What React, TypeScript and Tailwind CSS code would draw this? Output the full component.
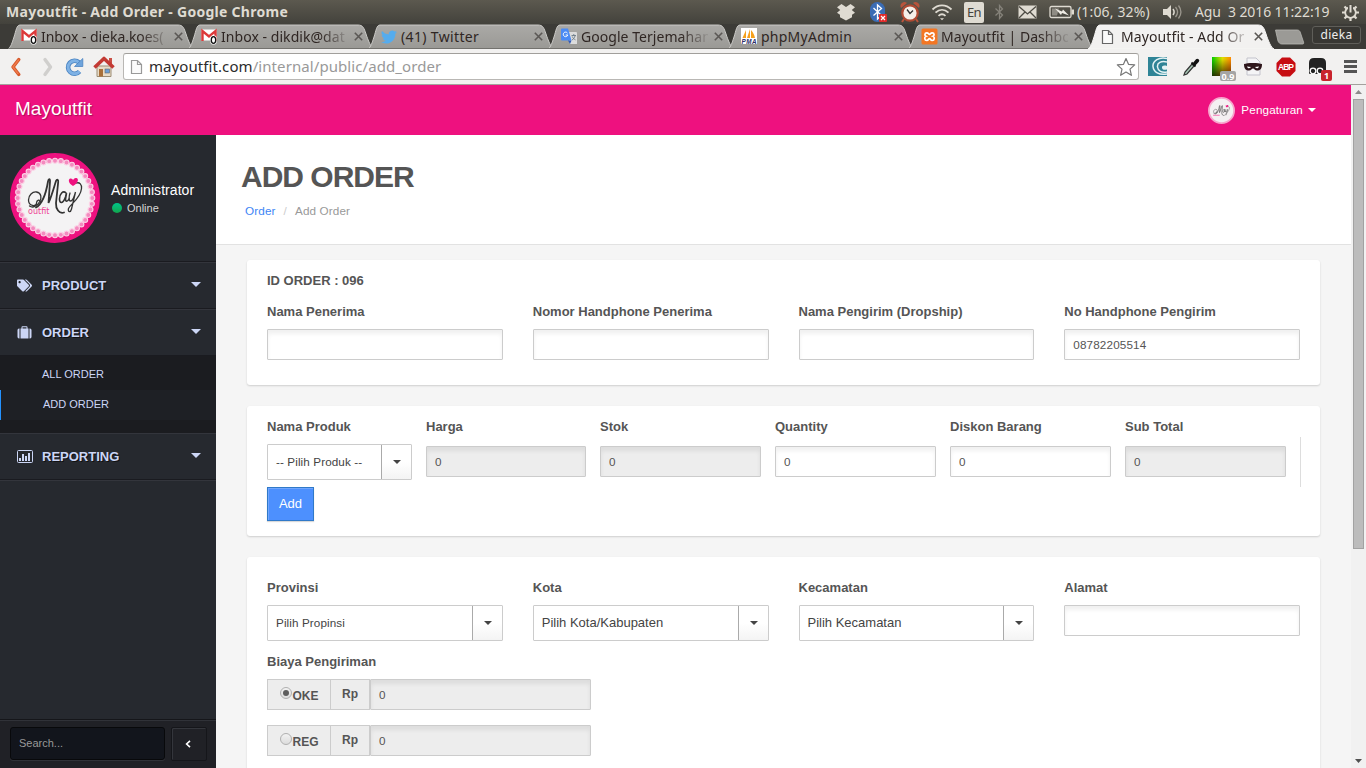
import React from "react";
import { FaTags } from "react-icons/fa";

const ui = "font-['Noto_Sans',sans-serif]";

/* ---------- browser icons ---------- */

const GmailIcon = () => (
  <svg width="17" height="17" viewBox="0 0 17 17">
    <rect x="0.5" y="1.5" width="15" height="11" fill="#fff" />
    <path d="M1.5 13V3L8 8.5 14.5 3v10" fill="none" stroke="#dd3a3a" strokeWidth="2.4" />
    <rect x="9.5" y="7.5" width="6" height="9" rx="2" fill="#fff" />
    <ellipse cx="12.5" cy="12" rx="2.2" ry="3.4" fill="#fff" stroke="#111" strokeWidth="1.3" />
  </svg>
);
const TwitterIcon = () => (
  <svg width="16" height="16" viewBox="0 0 24 24">
    <path fill="#55acee" d="M23.95 4.57a10 10 0 0 1-2.82.77 4.96 4.96 0 0 0 2.16-2.72c-.95.55-2 .95-3.13 1.19a4.92 4.92 0 0 0-8.38 4.48C7.69 8.1 4.07 6.13 1.64 3.16a4.92 4.92 0 0 0 1.52 6.57 4.9 4.9 0 0 1-2.23-.62v.06a4.92 4.92 0 0 0 3.95 4.83 5 5 0 0 1-2.21.08 4.94 4.94 0 0 0 4.6 3.42A9.87 9.87 0 0 1 0 19.54a13.99 13.99 0 0 0 7.55 2.21c9.14 0 14.31-7.72 14.0-14.6a10 10 0 0 0 2.4-2.58z" />
  </svg>
);
const TranslateIcon = () => (
  <svg width="17" height="17" viewBox="0 0 17 17">
    <path d="M6 4h9a1 1 0 0 1 1 1v11H9z" fill="#dcdcdc" />
    <path d="M0 1.500a1 1 0 0 1 1-1h6l3.500 12H1a1 1 0 0 1-1-1z" fill="#4b8bf4" />
    <path d="M7 12.500h3.500L9 16z" fill="#3058b5" />
    <path d="M6.500 5.100A2.300 2.300 0 1 0 6.800 7H4.700" fill="none" stroke="#fff" strokeWidth="1" />
    <path d="M10.500 7.500h4.500M12.800 6v1.500M14 8c-.4 2-1.600 3-3 4M11.300 8.500c.5 1.500 1.700 2.600 3.200 3.400" fill="none" stroke="#6b7a86" strokeWidth=".9" />
  </svg>
);
const PmaIcon = () => (
  <svg width="17" height="17" viewBox="0 0 17 17">
    <rect width="16" height="16" fill="#fff" />
    <path d="M1.500 10L5 2v8zM6 10L9 1v9zM10 10V2c2 2 3.500 5 4 8z" fill="#f6a01c" />
    <text x="0.500" y="15.800" fontSize="6.300" fontWeight="bold" fontStyle="italic" fill="#2b2b66" fontFamily="Liberation Sans, sans-serif" textLength="15">PMA</text>
  </svg>
);
const XamppIcon = () => (
  <svg width="17" height="17" viewBox="0 0 17 17">
    <rect x=".5" y=".5" width="16" height="16" rx="1.500" fill="#f37623" />
    <path d="M5.800 4.800c1.800 0 1.700 1.700 2.700 1.700s.9-1.700 2.700-1.700c2.400 0 2.300 2.900.8 3.500 1.900.7 1.700 4.200-.8 4.200-1.800 0-1.700-2-2.700-2s-.9 2-2.700 2c-2.500 0-2.700-3.500-.8-4.200-1.500-.6-1.600-3.500.8-3.500z" fill="none" stroke="#fff" strokeWidth="1.700" />
  </svg>
);
const PageIcon = ({ stroke = "#666" }: { stroke?: string }) => (
  <svg width="13" height="16" viewBox="0 0 13 16">
    <path d="M1.500 1.500h6l4 4v9h-10z M7.500 1.500v4h4" fill="#fafafa" stroke={stroke} strokeWidth="1.200" />
  </svg>
);

const Tab = ({
  icon,
  text,
  active = false,
  fade = true,
  track = "tracking-[0.25px]",
}: {
  icon: React.ReactNode;
  text: string;
  active?: boolean;
  fade?: boolean;
  track?: string;
}) => (
  <div className={`relative -mr-[6px] h-[25px] w-[186px] shrink-0 ${active ? "z-10" : ""}`}>
    <svg className="absolute inset-0" width="186" height="25" viewBox="0 0 186 25">
      <defs>
        <linearGradient id="tabfill" x1="0" x2="0" y1="0" y2="1">
          <stop offset="0" stopColor="#aaa9a6" />
          <stop offset="1" stopColor="#9a9995" />
        </linearGradient>
      </defs>
      <path
        d="M0 25C3 23 4 19 6 13S8.500 1 12 1H170C175 1 176 4 178 10S183 24 186 25Z"
        fill={active ? "#f2f1f0" : "url(#tabfill)"}
        stroke={active ? "#f7f6f5" : "#cbcac7"}
        strokeWidth="1"
      />
      {!active && <path d="M0 24.500H186" stroke="#73726e" />}
    </svg>
    <div className="relative flex h-[25px] items-center pl-[13px]">
      <span className="flex h-[17px] w-5 shrink-0 items-center">{icon}</span>
      <span
        className={`w-[127px] shrink-0 overflow-hidden text-[14px] leading-[22px] whitespace-nowrap text-[#2f2623] ${track} ${
          fade ? "[mask-image:linear-gradient(to_right,black_78%,rgba(0,0,0,0.1))]" : ""
        }`}
      >
        {text}
      </span>
      <svg className="ml-[6px] shrink-0" width="9" height="9" viewBox="0 0 9 9">
        <path d="M.8.8l7.400 7.400M8.200.8L.8 8.200" stroke="#5b5855" strokeWidth="1.600" />
      </svg>
    </div>
  </div>
);

const TitleBar = () => (
  <div className={`flex h-6 shrink-0 items-center bg-linear-to-b from-[#5c594f] to-[#43423c] ${ui} text-[#dfdbd2]`}>
    <div className="-mt-px w-[830px] pl-[6px] text-[14px] font-bold tracking-[0.28px] whitespace-nowrap">
      <span>Mayoutfit - Add Order - Google Chrome</span>
    </div>
    <svg className="ml-[6px]" width="20" height="18" viewBox="0 0 20 18">
      <path d="M5.500 1L10 4l4.500-3L19 4.300 15.800 7 19 9.800l-3 2v2.400L10 17.500l-6-3.300v-2.400l-3-2L4.200 7 1 4.300z" fill="#dfdbd2" />
    </svg>
    <svg className="ml-[13px]" width="19" height="22" viewBox="0 0 19 22">
      <rect x="1" y="1" width="15" height="20" rx="7.500" fill="#3a6cb4" />
      <path d="M4.500 7l8 7.500-4 3.500V4l4 3.500-8 7" fill="none" stroke="#fff" strokeWidth="1.300" />
      <rect x="10" y="13" width="8" height="8" rx="1" fill="#e02b2b" />
      <path d="M12 15l4 4m0-4l-4 4" stroke="#fff" strokeWidth="1.200" />
    </svg>
    <svg className="ml-[11px]" width="22" height="22" viewBox="0 0 22 22">
      <path d="M2 7a4 4 0 0 1 6-5zM20 7a4 4 0 0 0-6-5z" fill="#b8543c" />
      <path d="M5 18l-2 3M17 18l2 3" stroke="#b8543c" strokeWidth="2" />
      <circle cx="11" cy="12" r="7.700" fill="#f5efe9" stroke="#b04a33" strokeWidth="2.200" />
      <path d="M8 8.500l3 4 3-3" fill="none" stroke="#333" strokeWidth="1.300" />
    </svg>
    <svg className="ml-[10px]" width="22" height="18" viewBox="0 0 22 18" fill="none" stroke="#dfdbd2" strokeWidth="1.800">
      <path d="M1.500 6.500C7 1 15 1 20.500 6.500M4.500 9.700c4-3.900 9-3.900 13 0M7.500 12.800c2.200-2 4.800-2 7 0" />
      <path d="M9 15.300h4l-2 2z" fill="#dfdbd2" stroke="none" />
    </svg>
    <span className="ml-[11px] flex h-[21px] w-5 items-center justify-center rounded-[2px] bg-[#dfdbd2] text-[13px] tracking-[-0.040em] text-[#45433d]">
      <span className="mt-px">En</span>
    </span>
    <svg className="ml-[10px]" width="11" height="18" viewBox="0 0 11 18">
      <path d="M1.500 5.500l7 6.500-3 3.500V2.500l3 3.500-7 6.500" fill="none" stroke="#85827a" strokeWidth="1.300" />
    </svg>
    <svg className="ml-[13px]" width="19" height="14" viewBox="0 0 19 14">
      <rect x=".5" y=".5" width="18" height="13" fill="#dfdbd2" />
      <path d="M1 1.500L9.500 9 18 1.500M1 13l6-6M18 13l-6-6" fill="none" stroke="#4d4b44" strokeWidth="1.300" />
    </svg>
    <svg className="ml-[12px]" width="26" height="14" viewBox="0 0 26 14">
      <rect x="1" y="1.500" width="21" height="11" rx="1.500" fill="none" stroke="#dfdbd2" strokeWidth="1.300" />
      <path d="M22.500 4.500H25v5h-2.500z" fill="#dfdbd2" />
      <path d="M3 3.500h7l-2 7H3z" fill="#8f8c84" />
      <path d="M6 3.500l7 3 1-2 6 6-7-2.500-1 2z" fill="#efece5" />
    </svg>
    <span className="-mt-px ml-[2px] w-[86px] text-[14px] tracking-[0.150px] whitespace-nowrap">(1:06, 32%)</span>
    <svg width="20" height="16" viewBox="0 0 20 16">
      <path d="M0 5h4l4-4v14l-4-4H0z" fill="#dfdbd2" />
      <path d="M10 5c1.500 2 1.500 4 0 6" fill="none" stroke="#dfdbd2" strokeWidth="1.500" />
      <path d="M12.500 3c2.500 3 2.500 7 0 10M15.500 1.500c3 4 3 9 0 13" fill="none" stroke="#9b978e" strokeWidth="1.300" />
    </svg>
    <span className="-mt-px ml-[12px] w-[147px] text-[14px] tracking-[-0.100px] whitespace-pre">Agu  3 2016 11:22:19</span>
    <svg width="17" height="17" viewBox="0 0 17 17" fill="none" stroke="#dfdbd2">
      <circle cx="8.500" cy="8.500" r="5.300" strokeWidth="1.800" />
      <path d="M8.500 14v3M3 8.500H0M14 8.500h3M4.600 12.400l-2.100 2.100M12.400 12.400l2.100 2.100M4.600 4.600L2.500 2.500M12.400 4.600l2.100-2.100" strokeWidth="2.200" />
      <path d="M8.500 0v8" stroke="#504e46" strokeWidth="5" />
      <path d="M8.500 1v7.500" strokeWidth="2" />
    </svg>
  </div>
);

const TabStrip = () => (
  <div className={`flex h-[25px] shrink-0 bg-[#3c3b37] pl-2 ${ui}`}>
    <Tab icon={<GmailIcon />} text="Inbox - dieka.koes(" track="tracking-[-0.05px]" />
    <Tab icon={<GmailIcon />} text="Inbox - dikdik@dat" track="tracking-[0.05px]" />
    <Tab icon={<TwitterIcon />} text="(41) Twitter" fade={false} track="tracking-[0.35px]" />
    <Tab icon={<TranslateIcon />} text="Google Terjemahan" track="tracking-[0.05px]" />
    <Tab icon={<PmaIcon />} text="phpMyAdmin" fade={false} />
    <Tab icon={<XamppIcon />} text="Mayoutfit | Dashbo" track="tracking-[0.05px]" />
    <Tab icon={<PageIcon />} text="Mayoutfit - Add Or" active track="tracking-[0.1px]" />
    <svg className="mt-[5px] ml-[5px]" width="32" height="16" viewBox="0 0 32 16">
      <path d="M2.500 1H24c2 0 3 1 3.500 3l3 9c.5 1.500 0 2-1 2H9c-2 0-3-1-4-3z" fill="#9b9a96" stroke="#b8b7b3" strokeWidth=".8" />
    </svg>
    <div className="mt-[2px] ml-[7px] flex h-[18px] w-[49px] items-center justify-center rounded-[3px] border border-[#5f5e59] bg-[#383733] text-[12px] tracking-[0.300px] text-[#eeeeec]">dieka</div>
  </div>
);

const Toolbar = () => (
  <div className={`flex h-9 shrink-0 items-center border-b border-[#a3a19d] bg-[#f2f1f0] ${ui}`}>
    <svg className="ml-[9px]" width="14" height="20" viewBox="0 0 14 20">
      <path d="M9.800 2.500L4 10l5.800 7.500" fill="none" stroke="#d5572a" strokeWidth="3.400" strokeLinecap="round" strokeLinejoin="round" />
      <path d="M9.500 3L4 10l5 6.500" fill="none" stroke="#ef7b4b" strokeWidth="1.500" strokeLinecap="round" />
    </svg>
    <svg className="ml-[18px]" width="14" height="20" viewBox="0 0 14 20">
      <path d="M4 2.500L9.500 10 4 17.500" fill="none" stroke="#d0cfcd" strokeWidth="3.400" strokeLinecap="round" strokeLinejoin="round" />
    </svg>
    <svg className="ml-[10px]" width="20" height="20" viewBox="0 0 20 20">
      <path d="M14.500 14.500A6.500 6.500 0 1 1 14 5.500" fill="none" stroke="#4b84c2" strokeWidth="4.600" />
      <path d="M14.500 14.500A6.500 6.500 0 1 1 14 5.500" fill="none" stroke="#7fb2e5" strokeWidth="2.800" />
      <path d="M17.800 1.500v8h-8.300z" fill="#6ea4dc" stroke="#4b84c2" strokeWidth=".8" />
    </svg>
    <svg className="ml-[8px]" width="22" height="22" viewBox="0 0 22 22">
      <path d="M4 10h14v10.500H4z" fill="#e8dcc8" stroke="#9b8c75" />
      <path d="M6 13h4v7.500H6z" fill="#a8703a" />
      <rect x="12" y="13" width="4.500" height="4" fill="#6aa0d8" stroke="#666" strokeWidth=".6" />
      <path d="M16 2h3v6h-3z" fill="#c94f45" />
      <path d="M1.500 11.500L11 2.500l9.500 9" fill="none" stroke="#c33a34" strokeWidth="3.600" strokeLinejoin="round" />
    </svg>
    <div className="ml-[8px] flex h-[27px] w-[1016px] items-center rounded-[3px] border border-[#b9b7b4] border-t-[#a19f9b] bg-white pl-[6px]">
      <PageIcon stroke="#999" />
      <span className="-mt-px ml-[6px] text-[15px] leading-[24px] tracking-[0.080px] whitespace-nowrap text-[#2b2b2b]">
        mayoutfit.com<span className="text-[#999]">/internal/public/add_order</span>
      </span>
      <svg className="mr-[2px] ml-auto" width="20" height="20" viewBox="0 0 20 20">
        <path d="M10 1.500l2.500 5.800 6.200.6-4.700 4.200 1.400 6.200L10 15l-5.400 3.300L6 12.100 1.300 7.900l6.200-.6z" fill="#fff" stroke="#777" strokeWidth="1.200" strokeLinejoin="round" />
      </svg>
    </div>
    <svg className="ml-[9px]" width="19" height="19" viewBox="0 0 19 19">
      <rect width="19" height="19" fill="#2f8496" />
      <path d="M19 1.500C11-.5 4.500 4 5 9.500S11 18.500 19 17M19 5c-6-1.500-10 1-9.500 5s4 6 9.500 5" fill="none" stroke="#e5f3f5" strokeWidth="1.500" />
      <path d="M19 9c-3.500-1-5.500 0-5 2s2.500 2 5 1.500z" fill="#e5f3f5" />
    </svg>
    <svg className="ml-[15px]" width="18" height="20" viewBox="0 0 18 20">
      <path d="M2 18l1-3 7-8 2 2-7 8z" fill="#a9c8b7" stroke="#333" strokeWidth="1.200" />
      <path d="M9.500 5.500l4 4M12 6l2.500-3c1-1 2.500.3 1.500 1.500L13.500 7z" stroke="#111" strokeWidth="1.800" fill="#111" />
    </svg>
    <div className="relative ml-[12px] h-[19px] w-[19px] bg-[linear-gradient(to_bottom,transparent_10%,#200_130%),linear-gradient(to_right,#0c0,#dd0_55%,#f80)]">
      <span className="absolute top-[14px] left-[8px] flex h-[10px] w-[16px] items-center justify-center rounded-[2px] bg-[#a5a5a5] text-[9px] leading-none font-bold text-white">0.9</span>
    </div>
    <svg className="ml-[12px]" width="20" height="20" viewBox="0 0 20 20">
      <path d="M4 1h9l4 4v13H4z" fill="#f4f4f6" stroke="#c3c3cc" />
      <path d="M1 7c3-1.500 15-1.500 18 0 0 5-2 6.500-5 6.500-2 0-3-2-4-2s-2 2-4 2c-3 0-5-1.500-5-6.500z" fill="#2e161b" />
      <path d="M4 9.500l4 .6c-1 1.700-3.500 1.500-4-.6zM16 9.500l-4 .6c1 1.700 3.500 1.500 4-.6z" fill="#fff" />
    </svg>
    <svg className="ml-[13px]" width="20" height="20" viewBox="0 0 20 20">
      <path d="M6 .500h8L19.500 6v8L14 19.500H6L.500 14V6z" fill="#c70d12" />
      <text x="10" y="13.300" textAnchor="middle" fontSize="8.500" fontWeight="bold" fill="#fff" fontFamily="Liberation Sans, sans-serif" textLength="16">ABP</text>
    </svg>
    <div className="relative ml-[12px] h-5 w-[19px]">
      <svg width="19" height="20" viewBox="0 0 19 20">
        <path d="M1 6q0-5 5-5h7q5 0 5 5v10q0 1-1 1H2q-1 0-1-1z" fill="#222" />
        <circle cx="5" cy="14" r="2.800" fill="#222" stroke="#fff" strokeWidth="1.300" />
        <circle cx="12" cy="14" r="2.800" fill="#222" stroke="#fff" strokeWidth="1.300" />
      </svg>
      <span className="absolute top-[13px] left-[13px] flex h-[11px] w-[11px] items-center justify-center rounded-[2px] bg-[#c8232c] text-[9px] leading-none font-bold text-white">1</span>
    </div>
    <div className="ml-[17px] flex w-[13px] flex-col gap-[2px]">
      <span className="h-[3px] bg-[#555]" />
      <span className="h-[3px] bg-[#555]" />
      <span className="h-[3px] bg-[#555]" />
    </div>
  </div>
);

/* ---------- brand logo ---------- */

const beads = Array.from({ length: 40 }, (_, i) => (i * Math.PI * 2) / 40);

const Script = () => (
  <g>
    <g fill="none" stroke="#333" strokeWidth="1.300" strokeLinecap="round">
      <path d="M30.500 49c-.5-3-4-2-4 1 0 4-8 3.500-8-3 0-5 4-8.500 8-8 5 .8 5.500 6 3 10-2.500 4-6.500 6.500-10 4" />
      <path d="M26 54.500c7-4 10-14 12-26 .6-3 2.200-3 2 0L38.500 50C42 42 44 34 46 28c1-2 2.500-1.500 2.200 1L46 50c-.3 6 3 11 8 9.500" strokeWidth="1.800" />
      <path d="M56 40c-3-3-6.500 1-6.500 6s3.500 5 6-2l1-4-1 6c0 3 2 3 3.500 0" strokeWidth="1.600" />
      <path d="M60 40c-1 3-1.500 8 .5 8s4-5 5-9l-4 17c-1 4-4 3-3-.5 2.500-5 12-10 13-20 .5-4-2-6.500-5-5.500" />
    </g>
    <path d="M63 33c-5-3-5-7-2.500-7.500 1.300-.2 2.300.8 2.500 1.700 0-.7 1.500-2.700 3.500-2.200 3 1.300 1 5.500-3.500 8z" fill="#ee117f" />
  </g>
);

const Logo = () => (
  <svg width="90" height="90" viewBox="0 0 90 90" role="img" aria-label="May outfit">
    <circle cx="45" cy="45" r="45" fill="#ee117f" />
    <circle cx="45" cy="45" r="36.500" fill="#f4f3f4" />
    <g fill="#f48abf" stroke="#fbd3e6" strokeWidth="1.100">
      {beads.map((a) => (
        <circle key={a} cx={45 + 37.300 * Math.cos(a)} cy={45 + 37.300 * Math.sin(a)} r="2.500" />
      ))}
    </g>
    <Script />
    <text x="18" y="61" fontSize="8" fill="#ee3f93" fontFamily="DejaVu Sans, sans-serif" textLength="21.500">outfit</text>
  </svg>
);

const Caret = ({ className }: { className: string }) => (
  <svg className={className} viewBox="0 0 10 5" preserveAspectRatio="none">
    <path d="M0 0h10L5 5z" fill="currentColor" />
  </svg>
);

/* ---------- sidebar ---------- */

const NavItem = ({ icon, label }: { icon: React.ReactNode; label: string }) => (
  <div className="flex h-[47px] shrink-0 items-center border-t border-b border-t-[#33353c] border-b-[#1a1b20] bg-[#26292f] pr-[15px] pl-[17px] text-[13px] font-bold text-[#ccd6f6] [text-shadow:1px_1px_0_#111]">
    <span className="flex w-[25px]">{icon}</span>
    <span className="flex-1">{label}</span>
    <Caret className="-mt-[2px] h-[5px] w-[10px]" />
  </div>
);

const Sidebar = () => (
  <aside className="flex w-[216px] shrink-0 flex-col bg-[#26292f]">
    <div className="flex h-[127px] shrink-0 items-center border-b border-[#1a1b20] pl-[10px]">
      <Logo />
      <div className="ml-[11px]">
        <div className="mt-px text-[14px] leading-[18px] tracking-[0.050px] text-white">Administrator</div>
        <div className="flex items-center text-[11px] leading-[18px] text-[#d6d6d6]">
          <span className="mr-[5px] ml-px h-[10px] w-[10px] rounded-full bg-linear-to-b from-[#00c389] to-[#11a64c]" />
          Online
        </div>
      </div>
    </div>
    <NavItem icon={<FaTags size={15} />} label="PRODUCT" />
    <NavItem
      icon={
        <svg width="15" height="14" viewBox="0 0 15 14">
          <path d="M2.500 2.500v10H2A1.600 1.600 0 0 1 .500 11V4A1.600 1.600 0 0 1 2 2.500zM11.500 2.500V12.500h-8V2.500h1V1.200q0-.9.900-.9h4.200q.9 0 .9.900v1.300zM9.500 2.500V1.300h-4v1.200zM14.500 4v7a1.600 1.600 0 0 1-1.500 1.500h-.5v-10h.5A1.600 1.600 0 0 1 14.500 4z" fill="currentColor" />
        </svg>
      }
      label="ORDER"
    />
    <div className="flex h-[77px] shrink-0 flex-col bg-[#1b1c20] pt-[4px] text-[11px] text-[#ccd6f6]">
      <div className="flex h-[30px] items-center pb-[2px] pl-[42px]">ALL ORDER</div>
      <div className="flex h-[30px] items-center border-l border-[#2492ff] bg-[#1e2025] pb-[2px] pl-[42px]">ADD ORDER</div>
    </div>
    <NavItem
      icon={
        <svg width="16" height="13" viewBox="0 0 16 13">
          <rect x=".5" y=".5" width="15" height="12" rx="1" fill="none" stroke="currentColor" />
          <path d="M2 8h2v3H2zM5 4h2v7H5zM8 6h2v5H8zM11 3h2v8h-2z" fill="currentColor" />
        </svg>
      }
      label="REPORTING"
    />
    <div className="flex-1 border-t border-[#33353c]" />
    <div className="flex h-[49px] shrink-0 items-start border-t border-[#15161a] bg-[#202126] pt-[7px] pl-[10px] shadow-[inset_0_1px_0_#303238]">
      <div className="flex h-[33px] w-[155px] items-center rounded-[3px] border border-[#08090b] bg-[#12151c] pl-2 text-[11px] text-[#999] shadow-[0_1px_0_#303238]">Search...</div>
      <div className="ml-[6px] flex h-[34px] w-[36px] items-center justify-center rounded-[2px] border border-[#15161a] bg-[#202126] pr-[2px] pb-px text-white shadow-[inset_1px_1px_0_#34363c]">
        <svg width="6" height="8" viewBox="0 0 6 8">
          <path d="M5 .800L1.600 4 5 7.200" fill="none" stroke="currentColor" strokeWidth="1.600" />
        </svg>
      </div>
    </div>
  </aside>
);

/* ---------- form pieces ---------- */

const Label = ({ children }: { children: React.ReactNode }) => (
  <label className="block h-[18px] text-[13px] leading-[18px] font-bold whitespace-nowrap text-[#555]">{children}</label>
);

const Field = ({ value = "", disabled = false }: { value?: string; disabled?: boolean }) => (
  <div
    className={`flex h-[31px] w-full items-center rounded-[1px] border border-[#ccc] pl-2 text-[11.700px] tracking-[0.150px] text-[#555] ${
      disabled ? "bg-[#ededed] shadow-[inset_0_4px_4px_rgba(0,0,0,0.07)]" : "bg-white shadow-[inset_0_4px_4px_rgba(0,0,0,0.06)]"
    }`}
  >
    <span className="leading-[18px]">{value}</span>
  </div>
);

const Select = ({ text, size = "text-[13px]" }: { text: string; size?: string }) => (
  <div className="flex h-9 w-full rounded-[1px] border border-[#ccc] bg-white text-[#444]">
    <div className={`flex flex-1 items-center pl-2 whitespace-nowrap ${size}`}>{text}</div>
    <div className="flex w-[30px] items-center justify-center border-l border-[#aaa] bg-linear-to-b from-white from-50% to-[#f4f4f4] pl-px">
      <Caret className="h-[4px] w-2" />
    </div>
  </div>
);

const Card = ({ children, className }: { children: React.ReactNode; className: string }) => (
  <section className={`ml-[31px] w-[1073px] shrink-0 rounded-[3px] bg-white px-5 shadow-[0_1px_2px_rgba(0,0,0,0.16)] ${className}`}>{children}</section>
);

const ShippingRow = ({ name, checked = false }: { name: string; checked?: boolean }) => (
  <div className="flex h-[31px] w-[324px] text-[12px] font-bold text-[#555]">
    <div className="flex w-[64px] items-center border border-[#ccc] bg-[#ededed] pl-[12px]">
      <span className="mr-[0.5px] -mt-1 flex h-[12px] w-[12px] shrink-0 items-center justify-center rounded-full border border-[#b0b0b0] bg-linear-to-b from-[#f2f2f2] to-[#dcdcdc]">
        {checked && <span className="h-[6px] w-[6px] rounded-full bg-[#5d5d5d]" />}
      </span>
      <span className="mt-[2px]">{name}</span>
    </div>
    <div className="flex w-[38px] items-center justify-center border-y border-[#ccc] bg-[#ededed]">
      <span className="-mt-px">Rp</span>
    </div>
    <div className="flex flex-1 border-l border-[#ccc] font-normal">
      <Field value="0" disabled />
    </div>
  </div>
);

const Main = () => (
  <main className="flex w-[1135px] shrink-0 flex-col bg-[#f5f5f5]">
    <div className="h-[110px] shrink-0 border-b border-[#e2e2e2] bg-white pt-[24px] pl-[25px]">
      <h1 className="text-[30px] leading-9 font-bold tracking-[-1px] text-[#555]">ADD ORDER</h1>
      <div className="mt-[7px] ml-1 flex text-[11.700px] leading-[18px] tracking-[0.140px]">
        <a className="text-[#3d85f5]">Order</a>
        <span className="mx-2 text-[#ccc]">/</span>
        <span className="text-[#999]">Add Order</span>
      </div>
    </div>

    <Card className="mt-[15px] h-[125px] pt-[12px]">
      <Label>ID ORDER : 096</Label>
      <div className="mt-[13px] grid grid-cols-4 gap-[30px]">
        {[
          ["Nama Penerima", ""],
          ["Nomor Handphone Penerima", ""],
          ["Nama Pengirim (Dropship)", ""],
          ["No Handphone Pengirim", "08782205514"],
        ].map(([label, value]) => (
          <div key={label} className="flex flex-col gap-2">
            <Label>{label}</Label>
            <Field value={value} />
          </div>
        ))}
      </div>
    </Card>

    <Card className="mt-[21px] h-[130px] pt-[12px]">
      <div className="-mr-px flex">
        <div className="grid flex-1 grid-cols-[145px_160px_161px_161px_161px_161px] gap-x-[14px]">
          <div className="flex flex-col gap-2">
            <Label>Nama Produk</Label>
            <Select text="-- Pilih Produk --" size="text-[11.7px] tracking-[0.1px]" />
          </div>
          {[
            { label: "Harga", disabled: true },
            { label: "Stok", disabled: true },
            { label: "Quantity", disabled: false },
            { label: "Diskon Barang", disabled: false },
            { label: "Sub Total", disabled: true },
          ].map((f) => (
            <div key={f.label} className="flex flex-col gap-[10px]">
              <Label>{f.label}</Label>
              <Field value="0" disabled={f.disabled} />
            </div>
          ))}
        </div>
        <div className="mt-[19px] -mb-[7px] h-[50px] w-px bg-[#ddd]" />
      </div>
      <button className="mt-[7px] flex h-[34px] w-[47px] items-center justify-center border border-[#3079c8] bg-[#4d90fe] text-[13px] text-white shadow-[inset_1px_1px_0_rgba(255,255,255,0.2),0_1px_1px_rgba(0,0,0,0.15)]">Add</button>
    </Card>

    <Card className="mt-[21px] h-[240px] pt-[22px]">
      <div className="grid grid-cols-4 gap-[30px]">
        <div className="flex flex-col gap-2">
          <Label>Provinsi</Label>
          <Select text="Pilih Propinsi" size="text-[11.7px] tracking-[0.1px]" />
        </div>
        <div className="flex flex-col gap-2">
          <Label>Kota</Label>
          <Select text="Pilih Kota/Kabupaten" />
        </div>
        <div className="flex flex-col gap-2">
          <Label>Kecamatan</Label>
          <Select text="Pilih Kecamatan" />
        </div>
        <div className="flex flex-col gap-2">
          <Label>Alamat</Label>
          <Field />
        </div>
      </div>
      <div className="mt-[12px] flex flex-col">
        <Label>Biaya Pengiriman</Label>
        <div className="mt-2 flex flex-col gap-[15px]">
          <ShippingRow name="OKE" checked />
          <ShippingRow name="REG" />
        </div>
      </div>
    </Card>
  </main>
);

const Scrollbar = () => (
  <div className="flex w-[15px] shrink-0 flex-col items-center bg-[#f1f1f1]">
    <div className="flex h-[14px] items-center">
      <Caret className="h-[4px] w-[7px] rotate-180 text-[#8b8b8b]" />
    </div>
    <div className="h-[450px] w-[11px] border border-[#a2a2a2] bg-[#bcbcbc]" />
    <div className="mt-auto mb-[5px] flex">
      <Caret className="h-[4px] w-[7px] text-[#505050]" />
    </div>
  </div>
);

export default function App() {
  return (
    <div className="flex h-[768px] w-[1366px] flex-col overflow-hidden font-['Liberation_Sans',Arial,sans-serif]">
      <TitleBar />
      <TabStrip />
      <Toolbar />
      <div className="flex min-h-0 flex-1">
        <div className="flex w-[1351px] shrink-0 flex-col">
          <header className="flex h-[50px] shrink-0 items-center bg-[#ee117f] pr-[35px] pl-[15px] text-white">
            <span className="-mt-px flex-1 text-[19px] [text-shadow:1px_1px_1px_rgba(0,0,0,0.3)]">Mayoutfit</span>
            <svg className="mr-[6px]" width="27" height="27" viewBox="0 0 90 90">
              <circle cx="45" cy="45" r="42" fill="#f4f0f2" stroke="#f7a6cd" strokeWidth="6" />
              <g transform="translate(0 2)">
                <Script />
              </g>
              <path d="M17 61h22" stroke="#f48abf" strokeWidth="4" />
            </svg>
            <span className="text-[11.700px] leading-[18px] tracking-[0.120px]">Pengaturan</span>
            <Caret className="ml-[5px] h-[4px] w-2" />
          </header>
          <div className="flex min-h-0 flex-1">
            <Sidebar />
            <Main />
          </div>
        </div>
        <Scrollbar />
      </div>
    </div>
  );
}
